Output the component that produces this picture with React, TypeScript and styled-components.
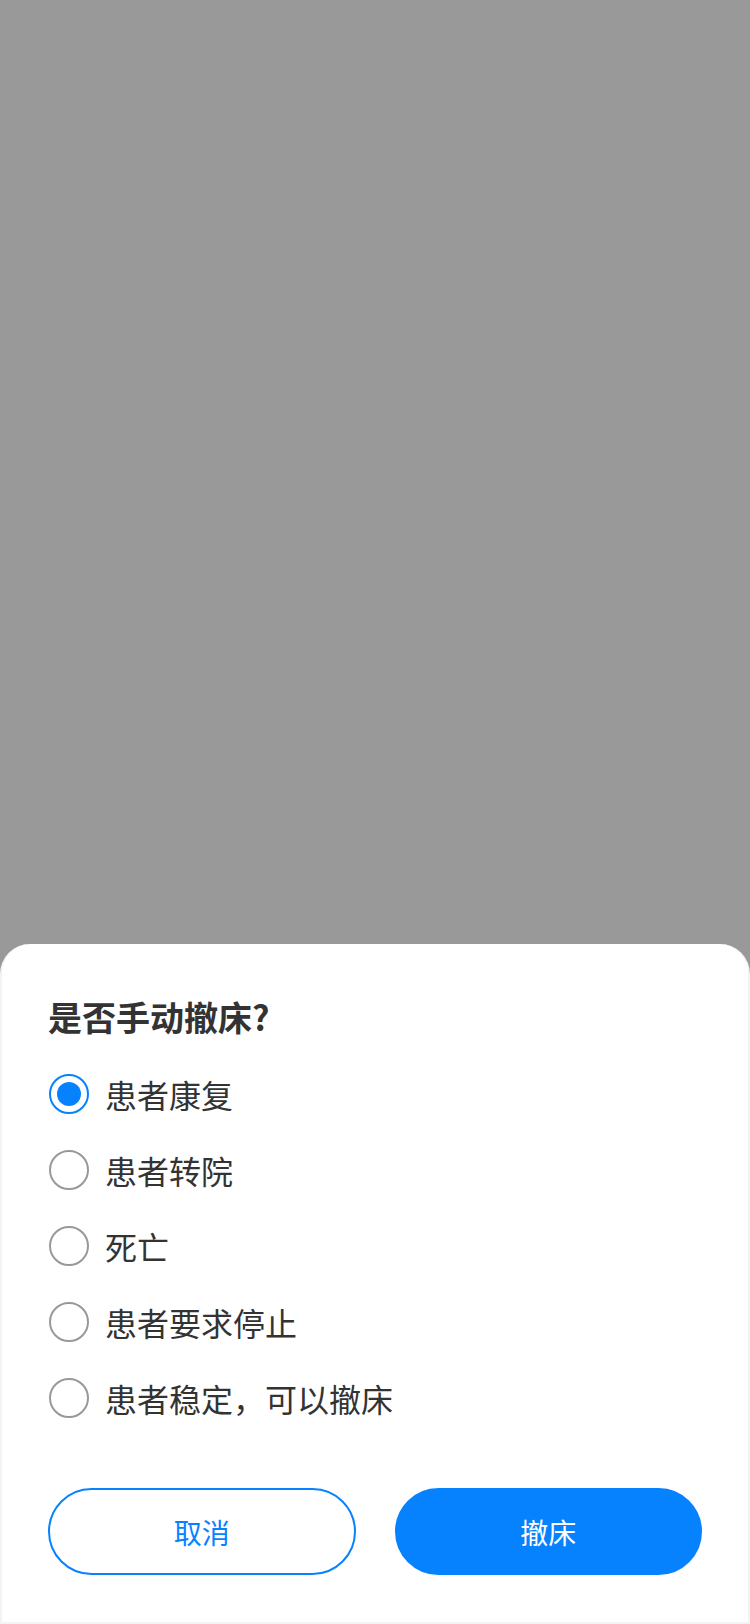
import React, { useState } from "react";
import styled, { createGlobalStyle } from "styled-components";

const Global = createGlobalStyle`
  html, body {
    margin: 0;
    padding: 0;
    background: #999999;
    font-family: "Noto Sans CJK SC", "Noto Sans", sans-serif;
  }
  * { box-sizing: border-box; }
`;

const Page = styled.div`
  width: 750px;
  height: 1624px;
  background: #999999;
  display: flex;
  flex-direction: column;
  justify-content: flex-end;
`;

const Sheet = styled.div`
  background: #ffffff;
  border-radius: 30px 30px 0 0;
  border: 2px solid #f3f3f3;
  border-top: none;
  padding: 49px 46px 47px 46px;
  display: flex;
  flex-direction: column;
`;

const Title = styled.h2`
  margin: 0;
  font-size: 34px;
  line-height: 48px;
  font-weight: 600;
  color: #333333;
`;

const Options = styled.div`
  margin-top: 15px;
  display: flex;
  flex-direction: column;
`;

const Option = styled.label`
  height: 76px;
  display: flex;
  align-items: center;
  gap: 16px;
  cursor: pointer;
`;

const Radio = styled.span<{ $checked: boolean }>`
  width: 40px;
  height: 40px;
  border-radius: 50%;
  border: 2px solid ${(p) => (p.$checked ? "#0782ff" : "#999999")};
  display: flex;
  align-items: center;
  justify-content: center;
  flex-shrink: 0;
  margin-left: 1px;

  &::after {
    content: "";
    width: 24px;
    height: 24px;
    border-radius: 50%;
    background: #0782ff;
    display: ${(p) => (p.$checked ? "block" : "none")};
  }
`;

const OptionText = styled.span`
  font-size: 32px;
  line-height: 44px;
  color: #333333;
`;

const Buttons = styled.div`
  margin-top: 52px;
  display: grid;
  grid-template-columns: 1fr 1fr;
  gap: 39px;
`;

const Button = styled.button<{ $primary?: boolean }>`
  height: 87px;
  border-radius: 44px;
  font-family: "Noto Sans CJK SC", "Noto Sans", sans-serif;
  font-size: 28px;
  border: 2px solid #0782ff;
  background: ${(p) => (p.$primary ? "#0782ff" : "#ffffff")};
  color: ${(p) => (p.$primary ? "#ffffff" : "#0782ff")};
  cursor: pointer;
`;

const reasons = ["患者康复", "患者转院", "死亡", "患者要求停止", "患者稳定，可以撤床"];

export default function App() {
  const [selected, setSelected] = useState(0);
  return (
    <>
      <Global />
      <Page>
        <Sheet>
          <Title>是否手动撤床?</Title>
          <Options>
            {reasons.map((r, i) => (
              <Option key={r} onClick={() => setSelected(i)}>
                <Radio $checked={selected === i} />
                <OptionText>{r}</OptionText>
              </Option>
            ))}
          </Options>
          <Buttons>
            <Button>取消</Button>
            <Button $primary>撤床</Button>
          </Buttons>
        </Sheet>
      </Page>
    </>
  );
}
